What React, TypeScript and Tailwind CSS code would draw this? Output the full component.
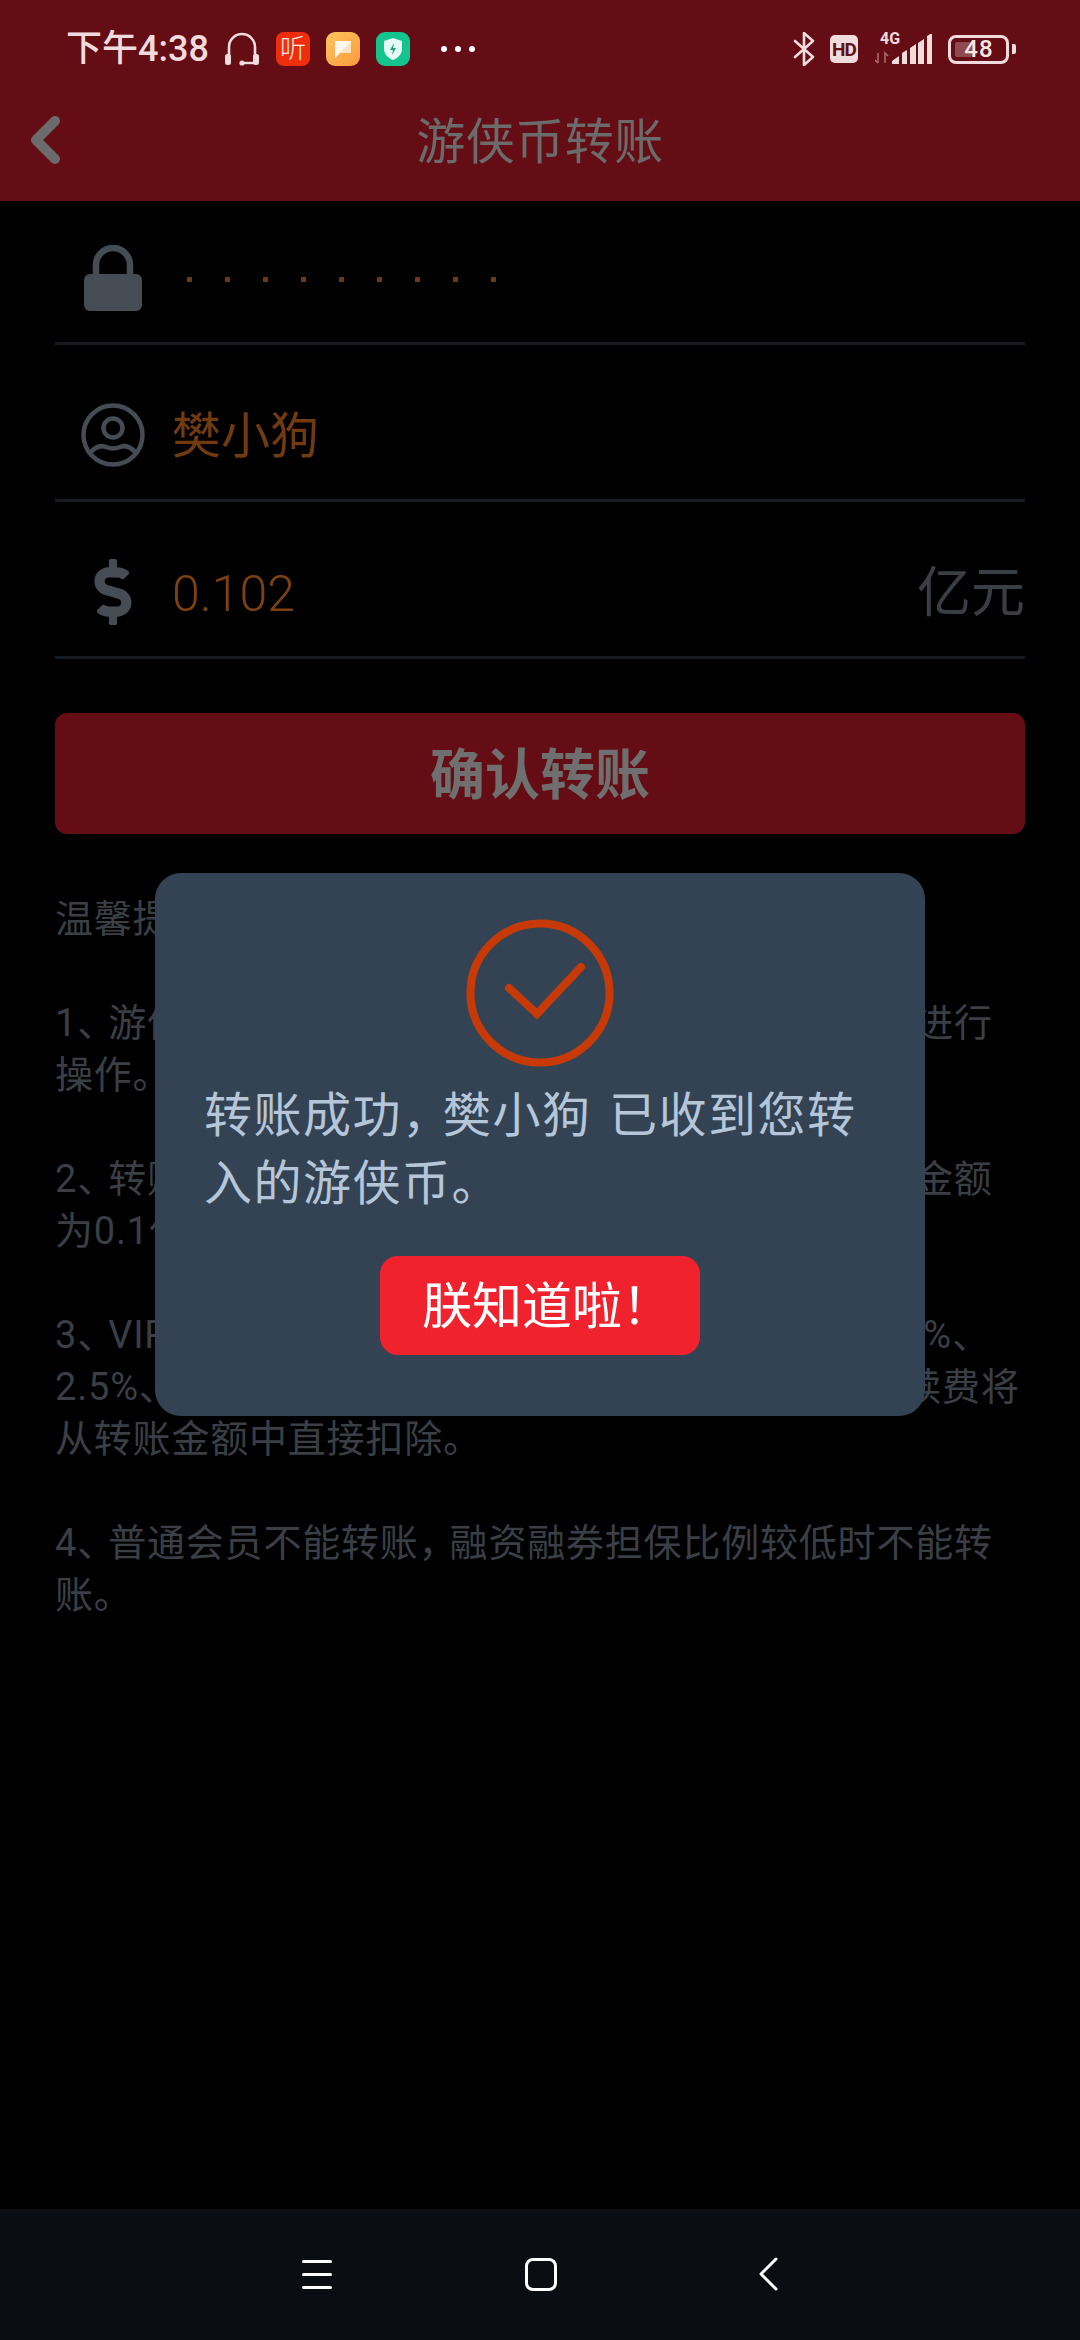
import { FaDollarSign } from "react-icons/fa";

const notes = [
  "温馨提示：",
  "",
  "1、游侠币转账功能需要先设置交易密码，之后才能进行",
  "操作。",
  "",
  "2、转账金额必须为0.10亿元的整数倍，最低的转账金额",
  "为0.1亿元。",
  "",
  "3、VIP等级不同，转账手续费率分别为2.5%、4%、3%、",
  "2.5%、2%、1.25%、1%和0.5%，转账时所产生的手续费将",
  "从转账金额中直接扣除。",
  "",
  "4、普通会员不能转账，融资融券担保比例较低时不能转",
  "账。",
];

// full-width punctuation sits tighter in the reference font
function Tight({ text }: { text: string }) {
  return (
    <>
      {text.split(/([，、])/).map((part, i) =>
        part === "，" || part === "、" ? (
          <span key={i} className="tracking-[-7px]">
            {part}
          </span>
        ) : (
          <span key={i}>{part}</span>
        )
      )}
    </>
  );
}

function StatusBar() {
  return (
    <div className="flex h-[98px] items-center justify-between pl-[66px] pr-[64px] text-[#f0dcdc]">
      <div className="flex items-center">
        <span className="w-[142px] text-[36px] font-medium leading-none whitespace-nowrap">下午4:38</span>
        <svg className="ml-[16px]" width="36" height="34" viewBox="0 0 36 34" fill="none">
          <path d="M5 24V15a13 13 0 0 1 26 0v9" stroke="#f0dcdc" strokeWidth="2.6" />
          <rect x="1" y="22" width="6" height="11" rx="2.5" fill="#f0dcdc" />
          <rect x="29" y="22" width="6" height="11" rx="2.5" fill="#f0dcdc" />
          <path d="M18 31h13" stroke="#f0dcdc" strokeWidth="2.4" />
          <circle cx="18" cy="31" r="2.6" fill="#f0dcdc" />
        </svg>
        <div className="ml-[16px] flex h-[34px] w-[34px] items-center justify-center rounded-[8px] bg-[#f02d0c] text-[26px] font-light leading-none text-[#ffe9e0]">
          听
        </div>
        <div className="ml-[16px] flex h-[34px] w-[34px] items-center justify-center rounded-[9px] bg-gradient-to-br from-[#ffc35c] to-[#fb9a3d]">
          <svg width="20" height="20" viewBox="0 0 20 20">
            <path d="M2 2h16v12H7l-5 5z" fill="#fbe3c4" />
            <path d="M2 19V2h16z" fill="#fff7ea" />
          </svg>
        </div>
        <div className="ml-[16px] flex h-[34px] w-[34px] items-center justify-center rounded-[9px] bg-[#14c48f]">
          <svg width="20" height="24" viewBox="0 0 20 24">
            <path d="M10 1l9 3v8c0 5-4 9-9 11-5-2-9-6-9-11V4z" fill="#e6fbf4" />
            <path d="M11 6l-4 7h3l-1 5 4-7h-3z" fill="#14a57c" />
          </svg>
        </div>
        <div className="ml-[31px] flex gap-[8px]">
          <span className="h-[6px] w-[6px] rounded-full bg-white" />
          <span className="h-[6px] w-[6px] rounded-full bg-white" />
          <span className="h-[6px] w-[6px] rounded-full bg-white" />
        </div>
      </div>

      <div className="flex items-center">
        <svg width="22" height="34" viewBox="0 0 22 34" fill="none">
          <path d="M2 9l18 16-9 8V1l9 8L2 25" stroke="#f0dcdc" strokeWidth="2.6" strokeLinejoin="round" strokeLinecap="round" />
        </svg>
        <div className="ml-[15px] flex h-[28px] w-[28px] items-center justify-center rounded-[5px] bg-[#f0dcdc] text-[19px] font-bold leading-none tracking-[-1px] text-[#640d14]">
          HD
        </div>
        <div className="relative ml-[17px] h-[30px] w-[57px]">
          <span className="absolute left-[5px] top-[-3px] text-[16px] font-bold leading-none">4G</span>
          <svg className="absolute left-0 top-0" width="57" height="30" viewBox="0 0 57 30">
            <path d="M3 19v10M0 26l3 3M10 29V19l3 3" stroke="#a8686c" strokeWidth="1.6" fill="none" />
            <path d="M17 30v-3l7-5v8zM27 30V19l5-3v14zM35 30V14l6-4v20zM43 30V9l6-4v25zM52 30V2l5-3v31z" fill="#f0dcdc" />
          </svg>
        </div>
        <div className="ml-[16px] flex items-center">
          <div className="relative flex h-[29px] w-[61px] items-center justify-center rounded-[8px] border-[3px] border-[#f0dcdc]">
            <span className="absolute left-[4px] top-[4px] h-[15px] w-[17px] rounded-[2px] bg-[#8f4a50]" />
            <span className="relative ml-[1px] text-[24px] font-medium leading-none tracking-[1px] text-[#f6e6e6]">48</span>
          </div>
          <span className="ml-[3px] h-[10px] w-[4px] rounded-r-[2px] bg-[#f0dcdc]" />
        </div>
      </div>
    </div>
  );
}

function Field({ icon, first, children }: { icon: React.ReactNode; first?: boolean; children: React.ReactNode }) {
  return (
    <div className={first ? "flex h-[144px] items-center border-b-[3px] border-[#161a21] pt-[12px]" : "flex h-[157px] items-center border-b-[3px] border-[#161a21] pt-[25px]"}>
      <div className="flex w-[119px] shrink-0 justify-center pr-[4px]">{icon}</div>
      {children}
    </div>
  );
}

export default function App() {
  return (
    <div className="relative flex h-[2340px] w-full flex-col overflow-hidden bg-black font-['Roboto','Noto_Sans_CJK_SC',sans-serif]">
      {/* Header */}
      <div className="h-[201px] shrink-0 bg-[#640d14]">
        <StatusBar />
        <div className="relative flex h-[88px] items-center justify-center">
          <svg className="absolute left-[27px] top-[17px]" width="36" height="50" viewBox="0 0 36 50" fill="none">
            <path d="M28 6L9 25l19 19" stroke="#6b6b6b" strokeWidth="10" strokeLinecap="round" strokeLinejoin="round" />
          </svg>
          <span className="text-[49px] leading-none tracking-[0.5px] text-[#6b6b6b]">游侠币转账</span>
        </div>
      </div>

      {/* Form */}
      <div className="flex-1 px-[55px]">
        <Field
          first
          icon={
            <svg width="58" height="66" viewBox="0 0 58 66" fill="none">
              <path d="M12 32V20a17 17 0 0 1 34 0v12" stroke="#454c54" strokeWidth="6.5" />
              <rect x="0" y="29" width="58" height="37" rx="6" fill="#454c54" />
            </svg>
          }
        >
          <div className="flex gap-[33px] pl-[13px] pt-[3px]">
            {Array.from({ length: 9 }).map((_, i) => (
              <span key={i} className="h-[5px] w-[5px] bg-[#6b3a12]" />
            ))}
          </div>
        </Field>
        <Field
          icon={
            <svg width="64" height="64" viewBox="0 0 64 64" fill="none" stroke="#454c54" strokeWidth="4.5">
              <circle cx="32" cy="32" r="29.5" />
              <circle cx="32" cy="25" r="9.5" />
              <path d="M9 50c5-6 11-8 16-6 5 2 9 2 14 0 5-2 11 0 16 6" />
            </svg>
          }
        >
          <span className="-ml-[2px] pt-[4px] text-[49px] leading-none text-[#723a0f]">樊小狗</span>
        </Field>
        <Field icon={<FaDollarSign size={66} color="#454c54" />}>
          <span className="-ml-[2px] pt-[4px] text-[50px] font-light leading-none text-[#7d4010]">0.102</span>
          <span className="ml-auto pt-[5px] text-[54px] leading-none text-[#3a3f45]">亿元</span>
        </Field>

        <div className="mt-[54px] flex h-[121px] items-center justify-center rounded-[12px] bg-[#640d14] pt-[4px] text-[55px] font-bold leading-none text-[#6f6f6f]">
          确认转账
        </div>

        <div className="mt-[59px] text-[38px] leading-[52px] tracking-[0.8px] text-[#3a3f45]">
          {notes.map((line, i) => (
            <div key={i} className="h-[52px] whitespace-nowrap">
              <Tight text={line} />
            </div>
          ))}
        </div>
      </div>

      {/* Bottom navigation */}
      <div className="flex h-[131px] shrink-0 items-center bg-[#0a0d12] pl-[302px]">
        <div className="flex items-center pb-[1px]">
          <div className="flex w-[30px] flex-col gap-[10px]">
            <span className="h-[3px] rounded-full bg-white" />
            <span className="h-[3px] rounded-full bg-white" />
            <span className="h-[3px] rounded-full bg-white" />
          </div>
          <div className="ml-[193px] h-[33px] w-[32px] rounded-[8px] border-[3px] border-white" />
          <svg className="ml-[201px]" width="20" height="34" viewBox="0 0 20 34" fill="none">
            <path d="M18 2L3 17l15 15" stroke="#fff" strokeWidth="3" strokeLinecap="round" strokeLinejoin="round" />
          </svg>
        </div>
      </div>

      {/* Success dialog */}
      <div className="absolute left-[155px] top-[873px] flex h-[543px] w-[770px] flex-col items-center rounded-[26px] bg-[#334354] px-[49px]">
        <svg className="mt-[46px] shrink-0" width="148" height="148" viewBox="0 0 148 148" fill="none">
          <circle cx="74" cy="74" r="69.5" stroke="#c73a08" strokeWidth="8" />
          <path d="M43 69l28 26 44-47" stroke="#c73a08" strokeWidth="8" strokeLinecap="round" />
        </svg>
        <p className="mt-[15px] w-full text-[48px] leading-[68px] tracking-[1.5px] text-[#b5c6d8] [word-spacing:4px]">
          <Tight text="转账成功，樊小狗 已收到您转入的游侠币。" />
        </p>
        <div className="mt-[38px] flex h-[99px] w-[320px] items-center justify-center rounded-[18px] bg-[#f0222e] pl-[14px] pt-[3px] text-[50px] leading-none text-white">
          朕知道啦！
        </div>
      </div>
    </div>
  );
}
